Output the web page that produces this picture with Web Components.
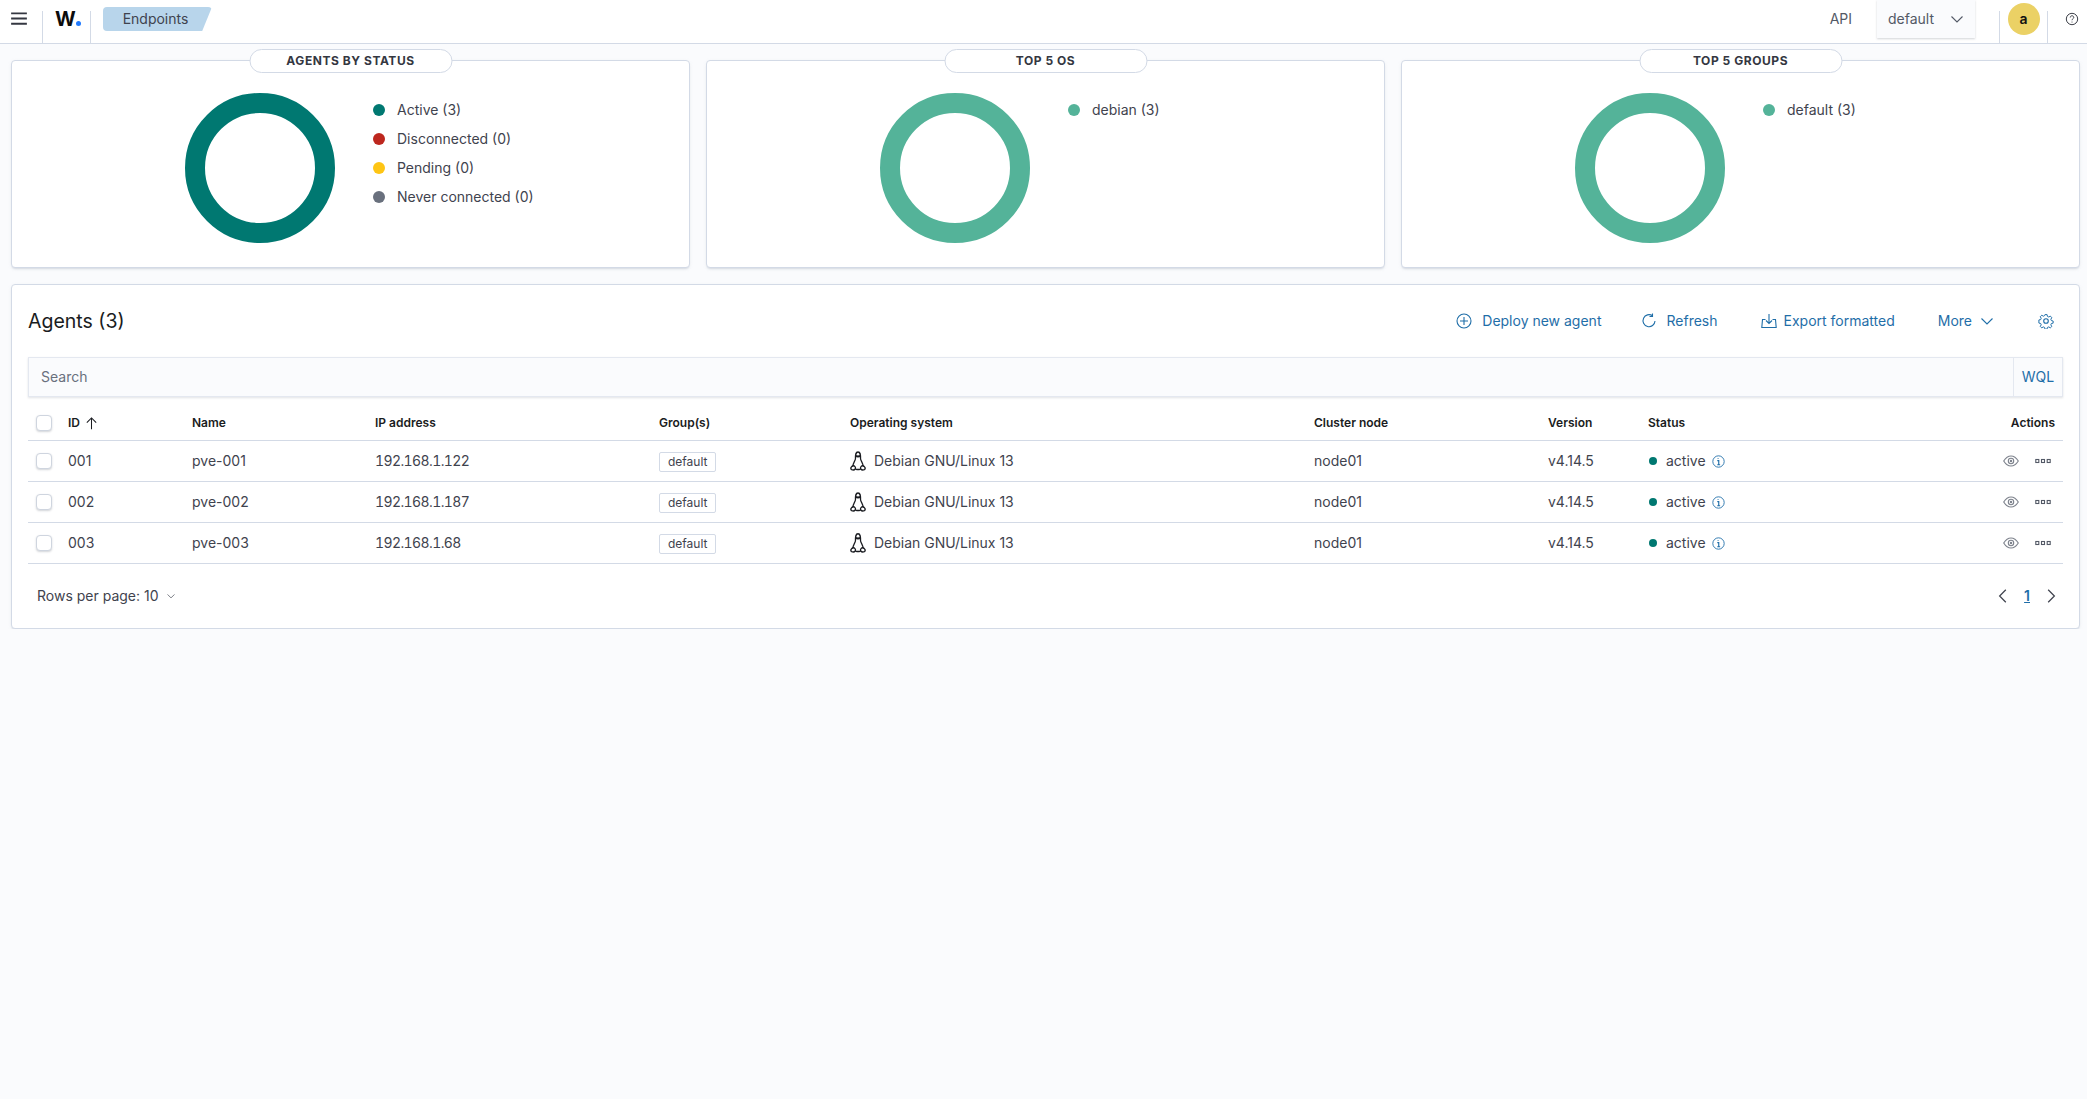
<!DOCTYPE html>
<html lang="en">
<head>
<meta charset="utf-8">
<title>Endpoints</title>
<style>
    html, body { margin: 0; min-height: 100%; }
    body {
        background: #fafbfd;
        color: #3f434e;
        font: 14px/20px Inter, "Noto Sans", sans-serif;
        --cols: 40px 124px 183px 284px 191px 464px 234px 100px 1fr 112px;
        --link: #1f6ea8;
    }
</style>
</head>
<body>
<wz-header></wz-header>
<wz-page>
    <wz-donut-card label="AGENTS BY STATUS" color="#007871">
        <wz-legend color="#007871">Active (3)</wz-legend>
        <wz-legend color="#bd271e">Disconnected (0)</wz-legend>
        <wz-legend color="#fec514">Pending (0)</wz-legend>
        <wz-legend color="#69707d">Never connected (0)</wz-legend>
    </wz-donut-card>
    <wz-donut-card label="TOP 5 OS" color="#54b399">
        <wz-legend color="#54b399">debian (3)</wz-legend>
    </wz-donut-card>
    <wz-donut-card label="TOP 5 GROUPS" color="#54b399">
        <wz-legend color="#54b399">default (3)</wz-legend>
    </wz-donut-card>
    <wz-agents-panel>
        <wz-agent-row id-no="001" name="pve-001" ip="192.168.1.122"></wz-agent-row>
        <wz-agent-row id-no="002" name="pve-002" ip="192.168.1.187"></wz-agent-row>
        <wz-agent-row id-no="003" name="pve-003" ip="192.168.1.68"></wz-agent-row>
    </wz-agents-panel>
</wz-page>

<script>
// all icons live here so every component can just say <wz-icon name="...">
const icons = {
    menu: '<path d="M1 3h14M1 7.600h14M1 12.200h14" stroke-width="1.700"/>',
    down: '<path d="M2.500 5.500 8 11l5.500-5.500"/>',
    left: '<path d="M10.500 2.500 5 8l5.500 5.500"/>',
    right: '<path d="M5.500 2.500 11 8l-5.500 5.500"/>',
    help: '<circle cx="8" cy="8" r="6.500"/><path d="M6 6.300C6 5 7 4.300 8 4.300s2 .8 2 1.900c0 1.500-2 1.600-2 3.200"/><path d="M8 11v1"/>',
    plus: '<circle cx="8" cy="8" r="7"/><path d="M8 4v8M4 8h8"/>',
    refresh: '<path d="M11.500 2.800A6 6 0 1 0 14 8"/><path d="M11.500 .5v3h-3"/>',
    export: '<path d="M4.500 6.500H1.500L.8 14.500h14.400l-.7-8h-3"/><path d="M8 1v9M5 7.500l3 3 3-3"/>',
    gear: '<circle cx="8" cy="8" r="2.300"/><path d="M6.800 .8h2.400l.4 2 1.500.7 1.800-1 1.600 1.800-1.100 1.700.6 1.500 2 .5v2.400l-2 .4-.6 1.500 1.100 1.800-1.700 1.600-1.700-1.100-1.500.6-.5 2H6.800l-.4-2-1.500-.6-1.700 1.100-1.700-1.700 1.100-1.700-.6-1.500-2-.5V6.800l2-.4.6-1.500-1.100-1.700 1.700-1.700 1.800 1.100 1.400-.7z" transform="translate(.9 .9) scale(.89)"/>',
    up: '<path d="M8 14V2M3 7l5-5 5 5"/>',
    info: '<circle cx="8" cy="8" r="7"/><path d="M6.500 7H8.300v5M6.500 12h3.500M7.500 4v1" stroke-width="1.400"/>',
    eye: '<path d="M.7 8C3 4.300 5.400 3 8 3s5 1.300 7.300 5C13 11.700 10.600 13 8 13S3 11.700.7 8z"/><circle cx="8" cy="8" r="2.700"/><circle cx="8" cy="8" r=".7"/>',
    dots: '<rect x=".8" y="6.500" width="3" height="3"/><rect x="6.500" y="6.500" width="3" height="3"/><rect x="12.200" y="6.500" width="3" height="3"/>',
    // penguin: drawn a little narrower than its box, the reference glyph is taller than wide
    tux: '<g transform="translate(1.200 0) scale(.85 1)" stroke-width="1.200"><path d="M5.600 6.200C5.600 3 5.700 .7 8 .7s2.400 2.300 2.400 5.500c0 1.600 2.600 3.700 2.600 6.500M3 12.700c0-2.800 2.600-4.900 2.600-6.500"/><path d="M6 3.800c.8.800 3.200.800 4 0" stroke-width="1.600"/><path d="M5.500 14.200c-1 1.300-2 1.300-3.500 .7-.9-.5-.9-1-.6-1.600.5-.9 1-1.500 1.900-1.600.8-.1 1.500.4 2 1 .4.500.4 1 .2 1.500zM10.500 14.200c1 1.300 2 1.300 3.500 .7.900-.5.900-1 .6-1.600-.5-.9-1-1.500-1.900-1.600-.8-.1-1.500.4-2 1-.4.500-.4 1-.2 1.500zM5.800 14.500c1.500.5 3 .5 4.400 0"/></g>'
};

class WzIcon extends HTMLElement {
    connectedCallback() {
        const size = this.getAttribute('size') || 16;
        const root = this.shadowRoot || this.attachShadow({ mode: 'open' });
        root.innerHTML = `
            <style>
                :host { display: inline-flex; flex: none; }
                svg { fill: none; stroke: currentColor; stroke-width: 1.100; display: block; }
            </style>
            <svg width="${size}" height="${size}" viewBox="0 0 16 16">${icons[this.getAttribute('name')]}</svg>`;
    }
}
customElements.define('wz-icon', WzIcon);

const headerTemplate = document.createElement('template');
headerTemplate.innerHTML = `
    <style>
        :host {
            display: flex;
            height: 43px;
            background: #fff;
            border-bottom: 1px solid #d3dae6;
            font-size: 14px;
        }
        .burger { width: 42px; display: flex; align-items: center; padding: 0 0 5px 10px; box-sizing: border-box; color: #343741; }
        .cut { border-left: 1px solid #d3dae6; height: 32px; align-self: flex-end; box-sizing: border-box; }
        .logo { width: 47px; font: 700 20px/20px Inter, sans-serif; color: #0c0c0c; padding: 0 0 0 12px; box-sizing: border-box; display: flex; align-items: center; height: 37px; margin-top: -11px; }
        .logo i { width: 5px; height: 5px; border-radius: 50%; background: #1f7aff; margin: 9px 0 0 0; }
        .crumb {
            margin: -4px 0 0 12px;
            width: 109px;
            height: 24px;
            background: #b8d5eb;
            border-radius: 4px;
            clip-path: polygon(0 0, 100% 0, 91% 100%, 0 100%);
            text-align: center;
            line-height: 24px;
            padding-right: 4px;
            box-sizing: border-box;
        }
        .grow { flex: 1; }
        .api { line-height: 38px; margin-right: 25px; color: #535966; }
        .space {
            width: 98px;
            height: 38px;
            background: #fafbfd;
            box-shadow: 0 1px 2px rgba(105, 112, 125, .3);
            display: flex;
            align-items: center;
            gap: 15px;
            padding-left: 11px;
            box-sizing: border-box;
            color: #535966;
            margin-right: 24px;
        }
        .avatar-wrap { width: 47px; display: flex; justify-content: center; margin-top: -11px; height: 43px; align-items: center; padding-bottom: 5px; box-sizing: border-box; }
        .avatar {
            width: 32px; height: 32px; border-radius: 50%;
            background: #ebd165; color: #111;
            font-weight: 600; font-size: 14px;
            display: flex; align-items: center; justify-content: center;
        }
        .help { width: 39px; height: 43px; margin-top: -11px; display: flex; align-items: center; justify-content: flex-end; padding: 0 8px 5px 0; box-sizing: border-box; color: #343741; }
    </style>
    <div class="burger"><wz-icon name="menu" size="18"></wz-icon></div>
    <div class="cut"><div class="logo">W<i></i></div></div>
    <div class="cut"><div class="crumb">Endpoints</div></div>
    <div class="grow"></div>
    <div class="api">API</div>
    <div class="space">default <wz-icon name="down" size="16"></wz-icon></div>
    <div class="cut"><div class="avatar-wrap"><div class="avatar">a</div></div></div>
    <div class="cut"><div class="help"><wz-icon name="help" size="14"></wz-icon></div></div>
`;

class WzHeader extends HTMLElement {
    constructor() {
        super();
        this.attachShadow({ mode: 'open' });
        this.shadowRoot.appendChild(headerTemplate.content.cloneNode(true));
    }
}
customElements.define('wz-header', WzHeader);

const pageTemplate = document.createElement('template');
pageTemplate.innerHTML = `
    <style>
        :host {
            display: grid;
            grid-template-columns: repeat(3, 679px);
            column-gap: 16px;
            row-gap: 16px;
            padding: 16px 7px 0 11px;
        }
        ::slotted(wz-agents-panel) { grid-column: 1 / -1; }
    </style>
    <slot></slot>
`;

class WzPage extends HTMLElement {
    constructor() {
        super();
        this.attachShadow({ mode: 'open' });
        this.shadowRoot.appendChild(pageTemplate.content.cloneNode(true));
    }
}
customElements.define('wz-page', WzPage);

const cardTemplate = document.createElement('template');
cardTemplate.innerHTML = `
    <style>
        :host {
            display: flex;
            position: relative;
            height: 208px;
            box-sizing: border-box;
            background: #fff;
            border: 1px solid #d3dae6;
            border-radius: 4px;
            box-shadow: 0 2px 2px -1px rgba(152, 162, 179, .3), 0 1px 5px -2px rgba(152, 162, 179, .3);
            padding: 32px 0 0 173px;
        }
        .pill {
            position: absolute;
            top: -12px;
            left: 50%;
            transform: translateX(-50%);
            width: 203px;
            height: 24px;
            box-sizing: border-box;
            background: #fff;
            border: 1px solid #d3dae6;
            border-radius: 12px;
            text-align: center;
            font: 700 12px/22px Inter, sans-serif;
            letter-spacing: .55px;
            color: #343741;
        }
        .ring {
            width: 150px;
            height: 150px;
            box-sizing: border-box;
            border-radius: 50%;
            border: 20px solid var(--ring);
            flex: none;
        }
        .legend { display: flex; flex-direction: column; gap: 9px; margin: 7px 0 0 38px; }
    </style>
    <div class="pill"></div>
    <div class="ring"></div>
    <div class="legend"><slot></slot></div>
`;

class WzDonutCard extends HTMLElement {
    constructor() {
        super();
        this.attachShadow({ mode: 'open' });
        this.shadowRoot.appendChild(cardTemplate.content.cloneNode(true));
    }

    connectedCallback() {
        this.shadowRoot.querySelector('.pill').textContent = this.getAttribute('label');
        this.shadowRoot.querySelector('.ring').style.setProperty('--ring', this.getAttribute('color'));
    }
}
customElements.define('wz-donut-card', WzDonutCard);

const legendTemplate = document.createElement('template');
legendTemplate.innerHTML = `
    <style>
        :host { display: flex; align-items: center; gap: 12px; height: 20px; font-size: 14px; }
        i { width: 12px; height: 12px; border-radius: 50%; }
    </style>
    <i></i><span><slot></slot></span>
`;

class WzLegend extends HTMLElement {
    constructor() {
        super();
        this.attachShadow({ mode: 'open' });
        this.shadowRoot.appendChild(legendTemplate.content.cloneNode(true));
    }

    connectedCallback() {
        this.shadowRoot.querySelector('i').style.background = this.getAttribute('color');
    }
}
customElements.define('wz-legend', WzLegend);

const panelTemplate = document.createElement('template');
panelTemplate.innerHTML = `
    <style>
        :host {
            display: block;
            height: 345px;
            box-sizing: border-box;
            background: #fff;
            border: 1px solid #d3dae6;
            border-radius: 4px;
            box-shadow: 0 2px 2px -1px rgba(152, 162, 179, .3), 0 1px 5px -2px rgba(152, 162, 179, .3);
            padding: 0 16px;
        }
        .top { display: flex; align-items: center; height: 72px; color: var(--link); }
        h2 { font: 400 19.500px/28px Inter, sans-serif; color: #1a1c21; margin: 0; flex: 1; }
        .act { display: flex; align-items: center; gap: 10px; margin-right: 40px; }
        .act.refresh { gap: 9px; margin-right: 43px; }
        .act.export { gap: 7px; margin-right: 43px; }
        .act.more { gap: 7px; margin-right: 43px; }
        .act:last-child { margin-right: 9px; }
        .search {
            display: flex;
            height: 40px;
            box-sizing: border-box;
            background: #fafbfd;
            border: 1px solid #e4e8f0;
            box-shadow: 0 1px 2px rgba(105, 112, 125, .2);
            color: #69707d;
            line-height: 38px;
            padding-left: 12px;
        }
        .search span { flex: 1; }
        .search b { font-weight: 400; color: var(--link); width: 48px; border-left: 1px solid #e4e8f0; text-align: center; }
        .row {
            display: grid;
            grid-template-columns: var(--cols);
            align-items: center;
            height: 43px;
            margin-top: 1px;
            padding-top: 8px;
            box-sizing: border-box;
            border-bottom: 1px solid #d3dae6;
            font: 600 12px/16px Inter, sans-serif;
            color: #1a1c21;
        }
        .check {
            width: 16px; height: 16px; margin-left: 8px;
            box-sizing: border-box;
            background: #fff;
            border: 1px solid #cfd5df;
            border-radius: 4px;
            box-shadow: 0 1px 2px rgba(105, 112, 125, .3);
        }
        .sort { display: flex; align-items: center; gap: 4px; }
        .end { grid-column: 10; text-align: right; padding-right: 8px; }
        .foot { display: flex; align-items: center; justify-content: space-between; height: 64px; padding: 0 3px 0 9px; }
        .rows { display: flex; align-items: center; gap: 7px; }
        .pages { display: flex; align-items: center; gap: 12px; font-weight: 600; font-size: 14px; }
        .pages u { color: var(--link); }
    </style>
    <div class="top">
        <h2>Agents (3)</h2>
        <div class="act"><wz-icon name="plus"></wz-icon>Deploy new agent</div>
        <div class="act refresh"><wz-icon name="refresh"></wz-icon>Refresh</div>
        <div class="act export"><wz-icon name="export"></wz-icon>Export formatted</div>
        <div class="act more">More <wz-icon name="down"></wz-icon></div>
        <div class="act"><wz-icon name="gear"></wz-icon></div>
    </div>
    <div class="search"><span>Search</span><b>WQL</b></div>
    <div class="row">
        <div class="check"></div>
        <div class="sort">ID <wz-icon name="up" size="15"></wz-icon></div>
        <div>Name</div><div>IP address</div><div>Group(s)</div><div>Operating system</div>
        <div>Cluster node</div><div>Version</div><div>Status</div>
        <div class="end">Actions</div>
    </div>
    <slot></slot>
    <div class="foot">
        <div class="rows">Rows per page: 10 <wz-icon name="down" size="10"></wz-icon></div>
        <div class="pages"><wz-icon name="left" size="18"></wz-icon><u>1</u><wz-icon name="right" size="18"></wz-icon></div>
    </div>
`;

class WzAgentsPanel extends HTMLElement {
    constructor() {
        super();
        this.attachShadow({ mode: 'open' });
        this.shadowRoot.appendChild(panelTemplate.content.cloneNode(true));
    }
}
customElements.define('wz-agents-panel', WzAgentsPanel);

const rowTemplate = document.createElement('template');
rowTemplate.innerHTML = `
    <style>
        :host {
            display: grid;
            grid-template-columns: var(--cols);
            align-items: center;
            height: 41px;
            box-sizing: border-box;
            border-bottom: 1px solid #d3dae6;
            font-size: 14px;
        }
        .check {
            width: 16px; height: 16px; margin-left: 8px;
            box-sizing: border-box;
            background: #fff;
            border: 1px solid #cfd5df;
            border-radius: 4px;
            box-shadow: 0 1px 2px rgba(105, 112, 125, .3);
        }
        .ip { font-variant-numeric: tabular-nums; font-kerning: none; letter-spacing: -.6px; }
        .badge {
            display: inline-block;
            font-size: 12px;
            line-height: 18px;
            padding: 0 8px;
            border: 1px solid #d3dae6;
            border-radius: 2px;
            background: #fff;
            vertical-align: middle;
        }
        .os { display: flex; align-items: center; gap: 6px; }
        .os wz-icon { margin-left: -2px; color: #1a1c21; }
        .status { display: flex; align-items: center; }
        .dot { width: 8px; height: 8px; border-radius: 50%; background: #007871; margin: 0 9px 0 1px; }
        .status wz-icon { color: var(--link); margin-left: 6px; }
        .actions { display: flex; justify-content: flex-end; align-items: center; gap: 16px; padding-right: 12px; color: #7d828c; }
        .actions wz-icon:last-child { color: #535966; }
    </style>
    <div class="check"></div>
    <div class="id"></div>
    <div class="name"></div>
    <div class="ip"></div>
    <div><span class="badge">default</span></div>
    <div class="os"><wz-icon name="tux" size="20"></wz-icon>Debian GNU/Linux 13</div>
    <div>node01</div>
    <div>v4.14.5</div>
    <div class="status"><span class="dot"></span>active<wz-icon name="info" size="13"></wz-icon></div>
    <div class="actions"><wz-icon name="eye"></wz-icon><wz-icon name="dots"></wz-icon></div>
`;

class WzAgentRow extends HTMLElement {
    constructor() {
        super();
        this.attachShadow({ mode: 'open' });
        this.shadowRoot.appendChild(rowTemplate.content.cloneNode(true));
    }

    connectedCallback() {
        this.shadowRoot.querySelector('.id').textContent = this.getAttribute('id-no');
        this.shadowRoot.querySelector('.name').textContent = this.getAttribute('name');
        this.shadowRoot.querySelector('.ip').textContent = this.getAttribute('ip');
    }
}
customElements.define('wz-agent-row', WzAgentRow);
</script>
</body>
</html>
